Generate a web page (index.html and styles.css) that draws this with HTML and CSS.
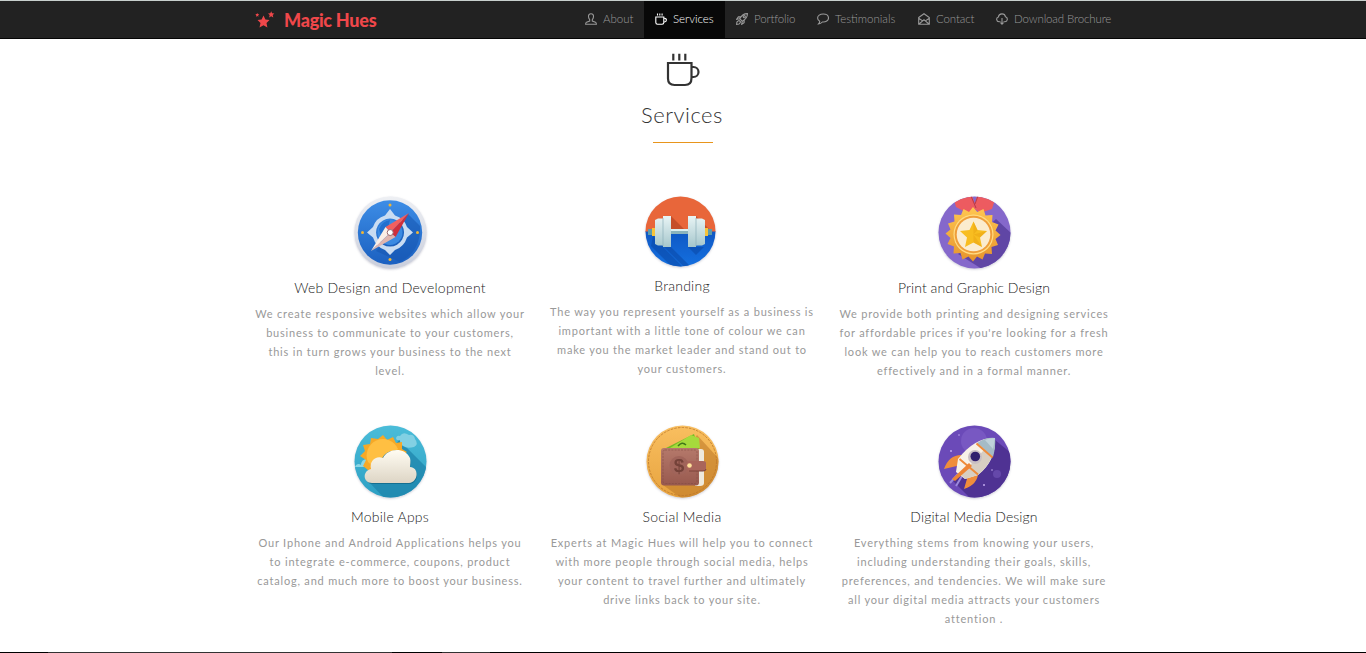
FILE: index.html
```html
<!DOCTYPE html>
<html lang="en">
<head>
<meta charset="utf-8">
<title>Magic Hues</title>
<link rel="stylesheet" href="styles.css">
</head>
<body>
<header class="bar">
  <div class="wrap bar-in">
    <a class="logo">
      <svg width="20" height="18" viewBox="0 0 20 18"><path d="M8.500 4.500l1.900 4 4.100.4-3 3 .9 4.600-3.900-2.300-4 2.300 1-4.600-3-3 4.100-.4zM16.200.2l.9 2.100 2.300.2-1.700 1.600.6 2.500-2.100-1.300-2.100 1.300.6-2.500-1.700-1.600 2.300-.2zM2.300 2l.5 1.100 1.400.2-1 .9.2 1.500-1.100-.7-1.300.7.3-1.500-1-.9 1.400-.2z"/></svg>
      <span>Magic Hues</span>
    </a>
    <nav class="nav">
      <a class="item"><svg class="ico" viewBox="0 0 12 12"><path d="M6 .7C4.100.7 3.400 2 3.500 3.700 3.600 5.200 4.200 6 4.700 6.600V8L1.500 9.200C.8 9.500.6 10.300.6 11.300H11.400C11.400 10.300 11.200 9.500 10.500 9.200L7.300 8V6.600C7.800 6 8.400 5.200 8.500 3.700 8.600 2 7.900.7 6 .7z"/></svg><span>About</span></a>
      <a class="item on"><svg class="ico" viewBox="0 0 12 12"><path d="M.8 4h8v5.500q0 1.700-1.700 1.700H2.500Q.8 11.200.8 9.500zM8.800 5.200h.7a1.900 1.900 0 0 1 0 3.800h-.7M2.500 .4v2.200M4.800.4v2.200M7.100.4v2.200"/></svg><span>Services</span></a>
      <a class="item"><svg class="ico" viewBox="0 0 12 12"><path d="M11.400.6C8 .4 5.500 2.600 3.700 5.600L6.400 8.300C9.400 6.500 11.600 4 11.400.6zM4.800 3.800 2.400 3.900.7 6.300 3.700 5.800M8.200 7.200 8.100 9.600 5.700 11.300 6.200 8.300M2.900 7.300 .9 9 .6 11.400 3 11.100 4.700 9.100M3 7.300 4.700 9"/><circle cx="8.300" cy="3.700" r="1.100"/></svg><span class="tight">Portfolio</span></a>
      <a class="item"><svg class="ico" viewBox="0 0 12 12"><path d="M6.200 1C3 1 .6 2.700.6 5c0 1.500.8 2.600 2.100 3.300.1 1.300-.6 2-1.200 2.600 1.800 0 3-.9 3.800-1.900 3.700.3 6.200-1.500 6.200-4S9.300 1 6.200 1z"/></svg><span>Testimonials</span></a>
      <a class="item"><svg class="ico" viewBox="0 0 12 12"><path d="M.7 4.500 6 .7l5.300 3.800v6.700H.7zM1 5.500l3.700 2.400L6 6.800l1.300 1.100L11 5.500M1 11l3.700-3.100M11 11 7.300 7.900"/></svg><span class="tight">Contact</span></a>
      <a class="item"><svg class="ico" viewBox="0 0 12 12"><path d="M4.500 8.700H3A2.400 2.400 0 0 1 2.400 4 3.600 3.600 0 0 1 9.500 3.800 2.500 2.500 0 0 1 9 8.700H7.500M6 5v6M4.500 9.600 6 11.100 7.500 9.600"/></svg><span class="tight">Download Brochure</span></a>
    </nav>
  </div>
</header>
<main class="wrap">
  <div class="head">
    <svg class="cup" width="34" height="34" viewBox="0 0 34 34"><path d="M2 10h23.500v15q0 7-6.500 7H8.500Q2 32 2 25.500zM25.500 14h2a4.800 4.800 0 0 1 0 10h-2M7.300.8v6.700M13.300.8v6.700M19.300.8v6.700"/></svg>
    <h1>Services</h1>
    <i class="rule"></i>
  </div>
  <section class="grid">
    <article class="card">
      <svg class="pic" viewBox="0 0 73 73">
        <defs><linearGradient id="blue" x2="0" y2="1"><stop stop-color="#3d8de6"/><stop offset="1" stop-color="#1b60c0"/></linearGradient><linearGradient id="rim" x2="0" y2="1"><stop stop-color="#eef0f4"/><stop offset="1" stop-color="#c9cedc"/></linearGradient></defs>
        <circle cx="36.500" cy="36.500" r="36" fill="url(#rim)"/><circle cx="36" cy="36.500" r="32.200" fill="url(#blue)"/>
        <path d="M54 18 66 30Q67 56 46 66L22 55z" fill="#1656b0" opacity=".55"/>
        <path fill-rule="evenodd" d="M36 13l5 6.500Q50 22 53 31l6 5.500-6 5Q50 51 41 54l-5 5-5-5Q22 51 19 41.500l-6-5 6-5.500Q22 22 31 19.500zM36 22.500a14 14 0 1 0 .1 0z" fill="#c9dcf2"/>
        <circle cx="36" cy="36.500" r="12.500" fill="#3b8ae2"/><path d="M25 33q3-8 11-9l-2 8-7 8z" fill="#2270cf"/>
        <path d="M55 17 31.500 31l5 5.500z" fill="#f2605f"/><path d="M55 17 41.500 41l-5-4.500z" fill="#cf2f3b"/><path d="M17 55 31.500 31l5 5.500z" fill="#fbeee6"/><path d="M17 55 41.500 41l-5-4.500z" fill="#e0b5ae"/>
        <circle cx="36.200" cy="36.500" r="3" fill="#fff" stroke="#9b6a70"/>
        <g fill="#f2b632"><circle cx="36" cy="9" r="1.500"/><circle cx="36" cy="63.500" r="1.500"/><circle cx="8.500" cy="36.500" r="1.500"/><circle cx="63.500" cy="36.500" r="1.500"/></g>
      </svg>
      <h2 class="wide">Web Design and Development</h2>
      <p>We create responsive websites which allow your<br>business to communicate to your customers,<br>this in turn grows your business to the next<br>level.</p>
    </article>
    <article class="card">
      <svg class="pic small" viewBox="0 0 71 71">
        <defs><linearGradient id="low" x2="0" y2="1"><stop stop-color="#0f58c4"/><stop offset="1" stop-color="#1470e0"/></linearGradient><linearGradient id="steel" x2="0" y2="1"><stop stop-color="#e9f5f5"/><stop offset="1" stop-color="#a5c6cc"/></linearGradient><clipPath id="c2"><circle cx="35.500" cy="35.500" r="35"/></clipPath></defs>
        <g clip-path="url(#c2)"><path d="M0 0h71v36H0z" fill="#e8663a"/><path d="M26 20l16 16H26zM51 20l16 16H51z" fill="#c54e2a"/><path d="M0 35.500h71V71H0z" fill="url(#low)"/><path d="M8 40l32 32H28L6 50zM18 51l20 20h8L26 51zM43 51l8 8 8-8z" fill="#0a4aa8" opacity=".6"/></g>
        <path d="M3 33h6v6H3zM61 33h6v6h-6z" fill="#5e9ba8"/><path d="M7 32h4v8H7zM59 32h4v8h-4z" fill="#f6c33a"/><path d="M25 33h20v5H25z" fill="#8bb4bc"/><path d="M25 33h20v2H25z" fill="#dceff0"/>
        <g fill="url(#steel)"><path d="M10 24l3-1.500h6v27h-6L10 48zM18 20h8v31h-8zM43 20h8v31h-8zM51 22.500h6l3 1.500v24l-3 1.500h-6z"/></g><path d="M18 22v28M51 22v28" stroke="#8db0b9" stroke-width=".7"/>
      </svg>
      <h2 class="wide">Branding</h2>
      <p>The way you represent yourself as a business is<br>important with a little tone of colour we can<br>make you the market leader and stand out to<br>your customers.</p>
    </article>
    <article class="card">
      <svg class="pic" viewBox="0 0 73 73">
        <defs><clipPath id="c3"><circle cx="36.500" cy="36.500" r="36"/></clipPath><linearGradient id="gold" x2="0" y2="1"><stop stop-color="#ffc751"/><stop offset="1" stop-color="#e6942c"/></linearGradient></defs>
        <g clip-path="url(#c3)"><path d="M0 0h73v73H0z" fill="#8568cb"/><path d="M58 23l15 14v36H44L20 58z" fill="#6046a5"/><path d="M15 0h19l5 13-10 4-11-6zM39 0h19l-4 13-12 4-6-5z" fill="#ed5b60"/><path d="M33 0l5 12M40 0l-3 8" stroke="#b83b4a"/></g>
        <path transform="translate(-1.500 0)" d="M36.500 11l4.300 5 6.200-3 2 6.500 7-.5-.5 7 6.500 2.500-3 6 5 4.500-5 4 2.500 6-6.500 2 .5 7-7-.5-2.500 6-5.500-3-4 5-4.500-5-6 3-2-6.500-7 .5.500-7-6.500-2.500 3-6-5-4.500 5-4-2.500-6 6.500-2-.5-7 7 .5 2.500-6 5.500 3z" fill="url(#gold)"/>
        <g transform="translate(-1 .5)"><circle cx="36.500" cy="38" r="20" fill="#ffdc83"/><circle cx="36.500" cy="38" r="18.800" fill="#ef9e3a"/><circle cx="36.500" cy="38" r="16.800" fill="#fbeccf"/>
        <path d="M36.500 25l4 8.500 9.500 1-7 6.500 2 9.500-8.500-4.500-8.500 4.500 2-9.500-7-6.500 9.500-1z" fill="#f8bd20"/><path d="M36.500 38V25l4 8.500zM36.500 38l13.500-3.500-7 6.500zM36.500 38l8.500 12.500-8.500-4.500z" fill="#e9a312" opacity=".5"/></g>
      </svg>
      <h2>Print and Graphic Design</h2>
      <p>We provide both printing and designing services<br>for affordable prices if you're looking for a fresh<br>look we can help you to reach customers more<br>effectively and in a formal manner.</p>
    </article>
    <article class="card">
      <svg class="pic" viewBox="0 0 73 73">
        <defs><clipPath id="c4"><circle cx="36.500" cy="36.500" r="36"/></clipPath><linearGradient id="sky" x2="0" y2="1"><stop stop-color="#4bbdd9"/><stop offset="1" stop-color="#2c9fc3"/></linearGradient><linearGradient id="cloud" x2="0" y2="1"><stop stop-color="#fffcf2"/><stop offset="1" stop-color="#ddd5c5"/></linearGradient></defs>
        <g clip-path="url(#c4)"><path d="M0 0h73v73H0z" fill="url(#sky)"/><path d="M45 15l28 28v30H30L15 57z" fill="#1c82a9" opacity=".7"/><path d="M1 42c1-3 4-4 6-2 0-6 7-8 10-4v6z" fill="#8bd6e5"/></g>
        <path d="M42 13q1-3 4-2 3-5 9-1 5-1 6 4 4 5-1 8-7 2-11-1-3-2-3-6-4 1-4-2z" fill="#82d0e3"/>
        <path d="M29 10l4 5 6-3 3 6 6-1v7l5 3-30 24-9-6-5-4 3-6-6-4 5-5-2-6 7-1 1-6 7 1z" fill="#f6a927"/><path d="M14 37a15.500 15.500 0 0 1 30-13L24 46z" fill="#ffbf42"/>
        <path d="M19 59c-9 0-10-12 0-14-3-8 3-14 9-11 3-9 20-13 27-1 3 4 1 8 1 10 9 0 10 15-1 16z" fill="#146f91"/><path d="M18 58c-9 0-10-12-1-14-2-8 5-14 12-11 4-9 21-12 27 0 1 3 0 7 0 9 9 0 9 15-1 16z" fill="url(#cloud)"/>
      </svg>
      <h2 class="wide">Mobile Apps</h2>
      <p>Our Iphone and Android Applications helps you<br>to integrate e-commerce, coupons, product<br>catalog, and much more to boost your business.</p>
    </article>
    <article class="card">
      <svg class="pic" viewBox="0 0 73 73">
        <defs><clipPath id="c5"><circle cx="36.500" cy="36.500" r="36"/></clipPath><linearGradient id="felt" x2="0" y2="1"><stop stop-color="#f9bf60"/><stop offset="1" stop-color="#e7a33f"/></linearGradient><linearGradient id="hide" x2="0" y2="1"><stop stop-color="#b5796b"/><stop offset="1" stop-color="#98594e"/></linearGradient></defs>
        <g clip-path="url(#c5)"><path d="M0 0h73v73H0z" fill="url(#felt)"/><path d="M51 10l22 24v39H35L17 60z" fill="#bb7726" opacity=".55"/></g>
        <circle cx="36.500" cy="36.500" r="34" fill="none" stroke="#bd772b" stroke-width=".8" stroke-dasharray="2.500 1.200"/>
        <path d="M20 23l28-14 5 15z" fill="#75bb25"/><path d="M24 23l21-13 8 3 1 10z" fill="#a6da3c"/><path d="M32 21q4-5 8-1" stroke="#3f7719" stroke-width="1.500" fill="none"/><path d="M49 24h6q3 0 3 3v31q0 3-4 3h-5z" fill="#eee9dc"/>
        <rect x="15" y="23" width="38" height="37.500" rx="3" fill="url(#hide)"/><rect x="17" y="25" width="34" height="33.500" rx="2" fill="none" stroke="#834d43" stroke-width=".6" stroke-dasharray="2 1.200"/><circle cx="33" cy="40.500" r="9.500" fill="#a0645a"/>
        <text x="33" y="47" class="dollar">$</text><path d="M43 36h14q3 0 3 2v6q0 2-3 2H43q-3-1-3-5t3-5z" fill="#a9655b"/><path d="M43 46h14q3 0 3-2" stroke="#7c453b" fill="none"/><circle cx="43.500" cy="40.500" r="2.300" fill="#ffe39b"/>
      </svg>
      <h2 class="wide">Social Media</h2>
      <p>Experts at Magic Hues will help you to connect<br>with more people through social media, helps<br>your content to travel further and ultimately<br>drive links back to your site.</p>
    </article>
    <article class="card">
      <svg class="pic" viewBox="0 0 73 73">
        <defs><clipPath id="c6"><circle cx="36.500" cy="36.500" r="36"/></clipPath></defs>
        <g clip-path="url(#c6)"><path d="M0 0h73v73H0z" fill="#6b4ab8"/><path d="M57 15l16 13v45H32L14 55z" fill="#4f3293"/><circle cx="36" cy="16" r="13" fill="#7858c2"/><circle cx="59" cy="49" r="4" fill="#6548aa"/></g>
        <g fill="#c0a9ee"><circle cx="13" cy="26" r="1"/><circle cx="46" cy="60" r="1"/><circle cx="54" cy="45" r=".8"/><circle cx="21" cy="10" r=".8"/></g>
        <path d="M12 58l8-9M18 61l6-10" stroke="#9b88dc" stroke-width="2"/>
        <path d="M23 30Q11 30 6 44l17-4zM40 48q0 11-14 16l5-17z" fill="#f08d3b"/>
        <path d="M57 13Q37 12 20 34l-2 13 9 7 13-4Q58 36 57 13z" fill="#f8f2e7"/><path d="M57 13q1 22-17 37l-13 4-4-4z" fill="#d8cec2"/><path d="M57 13q-9-1-18 5l16 14q3-11 2-19z" fill="#a5bbc6"/>
        <path d="M57 13q-6 0-10 2l8 9z" fill="#c0d2da"/>
        <path d="M38.500 18.500l16 14M21.500 34l18.500 15.500" stroke="#ef8b39" stroke-width="2"/><path d="M31 38l3 3-17 15-3-2z" fill="#ee8535"/>
        <circle cx="37" cy="32" r="7" fill="#c9bfc3"/><circle cx="37.300" cy="31.500" r="4.800" fill="#31206d"/>
      </svg>
      <h2 class="mid">Digital Media Design</h2>
      <p>Everything stems from knowing your users,<br>including understanding their goals, skills,<br>preferences, and tendencies. We will make sure<br>all your digital media attracts your customers<br>attention .</p>
    </article>
  </section>
</main>
<footer class="foot"><i></i><b></b><i></i></footer>
</body>
</html>
```
FILE: styles.css
```css
* { box-sizing: border-box; }
body { margin: 0; height: 653px; overflow: hidden; background: #fff; font-family: Lato, "Liberation Sans", sans-serif; display: flex; flex-direction: column; }
svg { display: block; flex: none; }
.wrap { width: 878px; margin: 0 auto; padding-right: 2px; }
.bar { height: 39px; background: #222; border-top: 1px solid #c8cfcd; border-bottom: 1px solid #050505; flex: none; }
.bar-in { display: flex; justify-content: space-between; height: 37px; }
.logo { display: flex; align-items: center; gap: 9px; padding-left: 11px; color: #ef474a; font-weight: 900; font-size: 18px; letter-spacing: -.25px; }
.logo span { white-space: nowrap; }
.logo svg { fill: #ef474a; }
.nav { display: grid; grid-template-columns: 70px 81px 81px 101px 78px 137px; margin-right: -2px; }
.item { display: flex; align-items: center; gap: 6px; padding: 0 0 2px 11px; color: #999; font-size: 11.500px; font-weight: 300; white-space: nowrap; }
.item.on { background: #080808; color: #fff; }
.tight { letter-spacing: -.12px; }
.ico { width: 12px; height: 12px; fill: none; stroke: currentColor; stroke-width: 1.100; }
main { flex: 1; min-height: 0; }
.head { display: flex; flex-direction: column; align-items: center; padding-top: 14px; }
.cup { fill: none; stroke: #333; stroke-width: 2.200; margin-left: 1px; }
h1 { margin: 14px 0 0; font-size: 22px; line-height: 28px; font-weight: 300; color: #333; letter-spacing: .5px; }
.rule { width: 60px; height: 1px; background: #e8951c; margin: 13px 0 0 1px; }
.grid { display: grid; grid-template-columns: repeat(3, 1fr); grid-template-rows: 229px 200px; padding-top: 53px; }
.card { display: flex; flex-direction: column; align-items: center; text-align: center; }
.pic { width: 73px; height: 73px; filter: drop-shadow(0 1px 1px rgba(60, 60, 100, .25)); }
.small { width: 71px; height: 71px; margin-right: 3px; }
.dollar { font: bold 19px "Liberation Sans", sans-serif; fill: #744239; text-anchor: middle; }
h2 { margin: 9px 0 6px; font-size: 14px; line-height: 20px; font-weight: 300; color: #222; letter-spacing: .05px; }
h2.wide { letter-spacing: .24px; }
h2.mid { letter-spacing: .1px; }
p { margin: 0; font-size: 11px; line-height: 19px; color: #999; letter-spacing: .8px; white-space: nowrap; }
.foot { flex: none; height: 1px; background: #333; display: grid; grid-template-columns: 48px 344px 50px 48px 1fr; }
.foot i { background: #000; grid-column: 1; grid-row: 1; }
.foot b { background: #000; grid-column: 3; grid-row: 1; }
.foot i:last-child { grid-column: 5; }
```
